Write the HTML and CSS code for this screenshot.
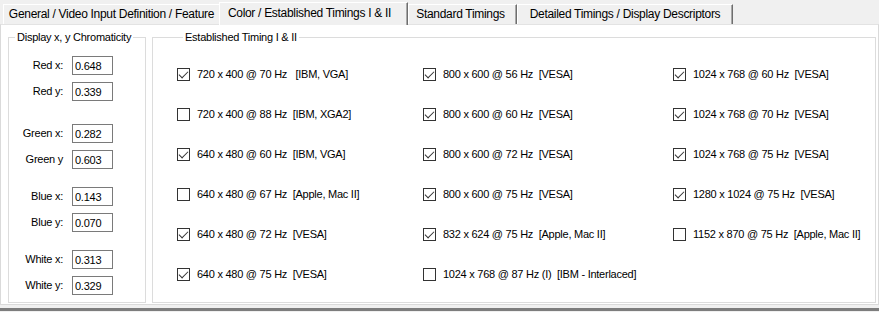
FILE: index.html
```html
<!DOCTYPE html>
<html lang="en">
<head>
    <meta charset="UTF-8">
    <title>EDID Editor - Color / Established Timings</title>
    <link rel="stylesheet" href="styles.css">
</head>
<body>
    <div class="window">
        <!-- Tab headers -->
        <div class="tabs">
            <div class="tab tab-general">General / Video Input Definition / Feature</div>
            <div class="tab tab-color active">Color / Established Timings I &amp; II</div>
            <div class="tab tab-standard">Standard Timings</div>
            <div class="tab tab-detailed">Detailed Timings / Display Descriptors</div>
        </div>

        <!-- Tab page -->
        <div class="page">
            <fieldset class="group chroma">
                <legend>Display x, y Chromaticity</legend>
                <div class="pair first">
                    <div class="field"><label>Red x:</label><input type="text" value="0.648"></div>
                    <div class="field"><label>Red y:</label><input type="text" value="0.339"></div>
                </div>
                <div class="pair">
                    <div class="field"><label>Green x:</label><input type="text" value="0.282"></div>
                    <div class="field"><label>Green y</label><input type="text" value="0.603"></div>
                </div>
                <div class="pair">
                    <div class="field"><label>Blue x:</label><input type="text" value="0.143"></div>
                    <div class="field"><label>Blue y:</label><input type="text" value="0.070"></div>
                </div>
                <div class="pair">
                    <div class="field"><label>White x:</label><input type="text" value="0.313"></div>
                    <div class="field"><label>White y:</label><input type="text" value="0.329"></div>
                </div>
            </fieldset>

            <fieldset class="group timings">
                <legend>Established Timing I &amp; II</legend>
                <div class="checks">
                    <label class="check on"><span class="box"></span>720 x 400 @ 70 Hz   [IBM, VGA]</label>
                    <label class="check on"><span class="box"></span>800 x 600 @ 56 Hz  [VESA]</label>
                    <label class="check on"><span class="box"></span>1024 x 768 @ 60 Hz  [VESA]</label>

                    <label class="check"><span class="box"></span>720 x 400 @ 88 Hz  [IBM, XGA2]</label>
                    <label class="check on"><span class="box"></span>800 x 600 @ 60 Hz  [VESA]</label>
                    <label class="check on"><span class="box"></span>1024 x 768 @ 70 Hz  [VESA]</label>

                    <label class="check on"><span class="box"></span>640 x 480 @ 60 Hz  [IBM, VGA]</label>
                    <label class="check on"><span class="box"></span>800 x 600 @ 72 Hz  [VESA]</label>
                    <label class="check on"><span class="box"></span>1024 x 768 @ 75 Hz  [VESA]</label>

                    <label class="check"><span class="box"></span>640 x 480 @ 67 Hz  [Apple, Mac II]</label>
                    <label class="check on"><span class="box"></span>800 x 600 @ 75 Hz  [VESA]</label>
                    <label class="check on"><span class="box"></span>1280 x 1024 @ 75 Hz  [VESA]</label>

                    <label class="check on"><span class="box"></span>640 x 480 @ 72 Hz  [VESA]</label>
                    <label class="check on"><span class="box"></span>832 x 624 @ 75 Hz  [Apple, Mac II]</label>
                    <label class="check"><span class="box"></span>1152 x 870 @ 75 Hz  [Apple, Mac II]</label>

                    <label class="check on"><span class="box"></span>640 x 480 @ 75 Hz  [VESA]</label>
                    <label class="check"><span class="box"></span>1024 x 768 @ 87 Hz (I)  [IBM - Interlaced]</label>
                </div>
            </fieldset>
        </div>
        <div class="bottom-edge"></div>
    </div>
</body>
</html>
```

FILE: styles.css
```css
* {
    margin: 0;
    padding: 0;
    box-sizing: border-box;
}
body {
    font-family: 'Liberation Sans', Arial, sans-serif;
    font-size: 11px;
    letter-spacing: -0.25px;
    color: #000;
    background-color: #f0f0f0;
    width: 879px;
    height: 312px;
    overflow: hidden;
}
.window {
    display: flex;
    flex-direction: column;
    height: 312px;
}

/* tabs */
.tabs {
    display: flex;
    align-items: flex-end;
    height: 24px;
    padding-left: 3px;
}
.tab {
    height: 20px;
    line-height: 19px;
    font-size: 12px;
    letter-spacing: -0.3px;
    text-align: center;
    white-space: nowrap;
    background-color: #f0f0f0;
    border-top: 1px solid #fff;
    border-left: 1px solid #fff;
    border-right: 1px solid #6e6e6e;
    box-shadow: inset -1px 0 #a8a8a8;
}
.tab-general { width: 216px; border-right: none; box-shadow: none; }
.tab-color { width: 189px; padding-right: 8px; }
.tab-standard { width: 109px; padding-right: 4px; }
.tab-detailed { width: 216px; }
.tab.active {
    height: 23px;
    line-height: 20px;
    margin-bottom: -1px;
    position: relative;
    z-index: 1;
}

/* tab page */
.page {
    display: flex;
    gap: 6px;
    height: 281px;
    padding: 6px 2px 0 7px;
    background-color: #fff;
    border: 1px solid #dadada;
    border-top-color: #e3e3e3;
}
.group {
    border: 1px solid #dcdcdc;
    height: 272px;
}
.group legend {
    margin-left: 6px;
    padding: 0 2px;
    line-height: 13px;
}
.chroma {
    width: 138px;
    padding-top: 12px;
    display: flex;
    flex-direction: column;
    gap: 18px;
}
.chroma .pair.first {
    margin-bottom: 5px;
}
.pair {
    display: flex;
    flex-direction: column;
    gap: 7px;
}
.field {
    display: flex;
    align-items: center;
    gap: 9px;
}
.field label {
    width: 54px;
    text-align: right;
    line-height: 19px;
}
.field input {
    width: 41px;
    height: 19px;
    border: 1px solid #7a7a7a;
    padding: 0 2px;
    font: inherit;
    letter-spacing: inherit;
    color: #000;
}

.timings {
    flex: 1;
    padding: 20px 0 0 24px;
}
.checks {
    display: grid;
    grid-template-columns: 246px 250px 1fr;
    grid-auto-rows: 20px;
    row-gap: 20px;
}
.check {
    display: flex;
    align-items: center;
    gap: 7px;
    white-space: pre;
}
.box {
    width: 13px;
    height: 13px;
    border: 1px solid #333;
    background-color: #fff;
    flex-shrink: 0;
    position: relative;
}
.check.on .box::after {
    content: "";
    position: absolute;
    left: 3px;
    top: 0px;
    width: 4px;
    height: 8px;
    border-right: 1px solid #333;
    border-bottom: 1px solid #333;
    transform: rotate(45deg);
}

.bottom-edge {
    margin-top: 3px;
    height: 3px;
    background-color: #7d7d7d;
}
```
